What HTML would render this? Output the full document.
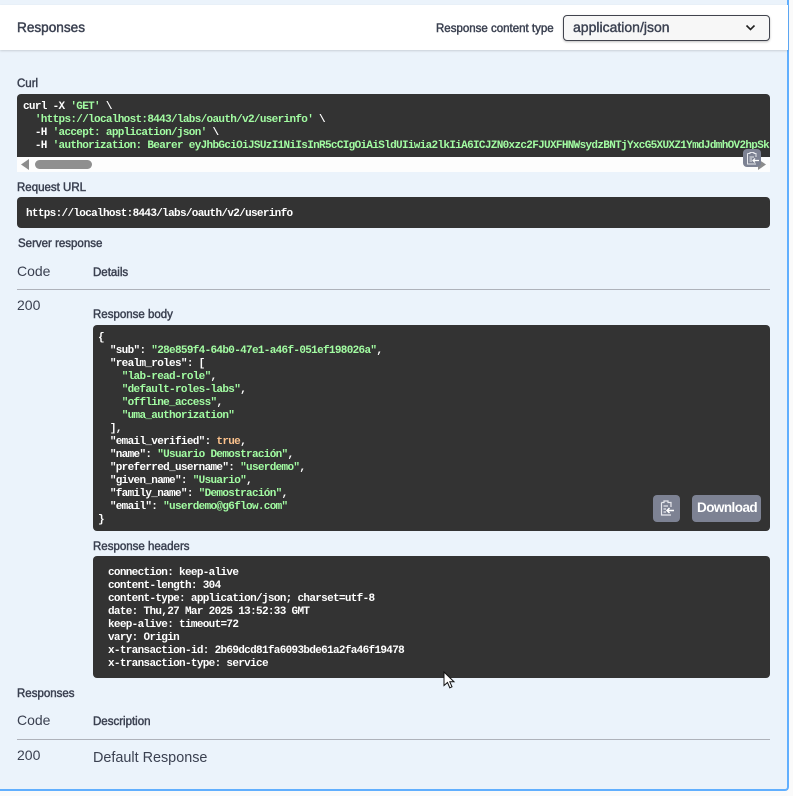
<!DOCTYPE html>
<html><head><meta charset="utf-8"><style>
*{box-sizing:border-box}
html,body{margin:0;padding:0}
body{width:793px;height:796px;position:relative;overflow:hidden;background:#fafafa;font-family:"Liberation Sans",sans-serif;color:#3b4151}
.a{position:absolute;white-space:pre;line-height:14px}
.b{font-weight:400;font-size:11.500px;color:#3b4151;-webkit-text-stroke:.45px #3b4151;margin-top:1px}
.d{position:absolute;background:#333;border-radius:4px}
.c{position:absolute;white-space:pre;font:700 11px/13px "Liberation Mono",monospace;letter-spacing:-.68px;color:#fff}
.g{color:#a2fca2}.o{color:#fcc28c}
.l{position:absolute;height:1px;background:#aeb2ba}
</style></head><body>
<div style="position:absolute;left:0;top:0;width:789px;height:791px;background:#ebf3fb;border-right:2px solid #61affe;border-bottom:2px solid #61affe;border-bottom-right-radius:4px"></div>
<div style="position:absolute;left:0;top:5px;width:788px;height:45px;background:#fff;box-shadow:0 1px 2px rgba(0,0,0,.15)"></div>
<div class="a" style="left:17px;top:21px;font-size:13.600px;-webkit-text-stroke:.45px #3b4151">Responses</div>
<div class="a b" style="left:436px;top:21px">Response content type</div>
<div style="position:absolute;left:563px;top:15px;width:207px;height:26px;background:#f7f7f7;border:1px solid #41444e;border-radius:4px;box-shadow:0 1px 2px rgba(0,0,0,.25)"></div>
<div class="a" style="left:573px;top:20px;font-size:14px;-webkit-text-stroke:.4px #3b4151">application/json</div>
<svg style="position:absolute;left:745px;top:24px" width="12" height="8"><path d="M1.5 1.5 5.5 5.500 9.500 1.500" fill="none" stroke="#222" stroke-width="1.600"/></svg>

<div class="a b" style="left:17px;top:76px">Curl</div>
<div style="position:absolute;left:17px;top:157px;width:753px;height:15px;background:#fdfdfd"></div>
<div class="d" style="left:17px;top:94px;width:753px;height:63px;border-radius:4px 4px 0 0;overflow:hidden"><div class="c" style="left:6px;top:5px;margin-top:2px">curl -X <span class="g">'GET'</span> \
  <span class="g">'https://localhost:8443/labs/oauth/v2/userinfo'</span> \
  -H <span class="g">'accept: application/json'</span> \
  -H <span class="g">'authorization: Bearer eyJhbGciOiJSUzI1NiIsInR5cCIgOiAiSldUIiwia2lkIiA6ICJZN0xzc2FJUXFHNWsydzBNTjYxcG5XUXZ1YmdJdmhOV2hpSk</span></div></div>
<svg style="position:absolute;left:20px;top:159px" width="10" height="11"><path d="M9 0V11L1 5.500Z" fill="#8c8c8c"/></svg>
<div style="position:absolute;left:35px;top:160px;width:57px;height:9px;background:#8f8f8f;border-radius:5px"></div>
<svg style="position:absolute;left:757px;top:159px" width="10" height="11"><path d="M1 0V11L9 5.500Z" fill="#8c8c8c"/></svg>
<div style="position:absolute;left:743px;top:149px;width:18px;height:18px;background:#7d8293;border-radius:4px"></div>
<svg style="position:absolute;left:743px;top:149px" width="18" height="18"><path d="M4.500 4.500H7V3.500H11V4.500H13V8M13 15H4.500V4.500M6.500 8H11M6.500 10H9M6.500 12H9" fill="none" stroke="#e8e9ee" stroke-width="1"/><path d="M10 11.500H16M12 9.500 10 11.500 12 13.500" fill="none" stroke="#fff" stroke-width="1.200"/></svg>

<div class="a b" style="left:17px;top:180px">Request URL</div>
<div class="d" style="left:17px;top:197px;width:753px;height:31px"><div class="c" style="left:9px;top:11px">https://localhost:8443/labs/oauth/v2/userinfo</div></div>

<div class="a b" style="left:18px;top:236px">Server response</div>
<div class="a" style="left:17px;top:264px;font-size:14px">Code</div>
<div class="a b" style="left:93px;top:265px">Details</div>
<div class="l" style="left:17px;top:289px;width:753px"></div>
<div class="a" style="left:17px;top:298px;font-size:14px">200</div>
<div class="a b" style="left:93px;top:307px">Response body</div>
<div class="d" style="left:93px;top:325px;width:677px;height:206px"><div class="c" style="left:5px;top:7px">{
  "sub": <span class="g">"28e859f4-64b0-47e1-a46f-051ef198026a"</span>,
  "realm_roles": [
    <span class="g">"lab-read-role"</span>,
    <span class="g">"default-roles-labs"</span>,
    <span class="g">"offline_access"</span>,
    <span class="g">"uma_authorization"</span>
  ],
  "email_verified": <span class="o">true</span>,
  "name": <span class="g">"Usuario Demostración"</span>,
  "preferred_username": <span class="g">"userdemo"</span>,
  "given_name": <span class="g">"Usuario"</span>,
  "family_name": <span class="g">"Demostración"</span>,
  "email": <span class="g">"userdemo@g6flow.com"</span>
}</div></div>
<div style="position:absolute;left:653px;top:495px;width:27px;height:27px;background:#7d8293;border-radius:4px"></div>
<svg style="position:absolute;left:653px;top:495px" width="27" height="27"><path d="M8.500 7.500H11V6H15V7.500H18V12M18 20H8.500V7.500M10.500 11H15M10.500 14H13M10.500 17H13" fill="none" stroke="#e8e9ee" stroke-width="1.200"/><path d="M14 15.500H21M16.500 13 14 15.500 16.500 18" fill="none" stroke="#fff" stroke-width="1.500"/></svg>
<div style="position:absolute;left:692px;top:495px;width:69px;height:27px;background:#7d8293;border-radius:4px"></div>
<div class="a" style="left:697px;top:501px;font-size:13.500px;font-weight:700;color:#fff;letter-spacing:-.55px">Download</div>

<div class="a b" style="left:93px;top:539px">Response headers</div>
<div class="d" style="left:93px;top:556px;width:677px;height:122px"><div class="c" style="left:15px;top:11px">connection: keep-alive
content-length: 304
content-type: application/json; charset=utf-8
date: Thu,27 Mar 2025 13:52:33 GMT
keep-alive: timeout=72
vary: Origin
x-transaction-id: 2b69dcd81fa6093bde61a2fa46f19478
x-transaction-type: service</div></div>
<svg style="position:absolute;left:443px;top:671px" width="14" height="19"><path d="M1 1V14.500L4.500 11.500 6.800 16.800 9 15.800 6.800 10.800H11Z" fill="#fff" stroke="#111" stroke-width="1"/></svg>

<div class="a b" style="left:17px;top:686px">Responses</div>
<div class="a" style="left:17px;top:713px;font-size:14px">Code</div>
<div class="a b" style="left:93px;top:714px">Description</div>
<div class="l" style="left:17px;top:739px;width:753px"></div>
<div class="a" style="left:17px;top:748px;font-size:14px">200</div>
<div class="a" style="left:93px;top:751px;font-size:14.400px">Default Response</div>
</body></html>
